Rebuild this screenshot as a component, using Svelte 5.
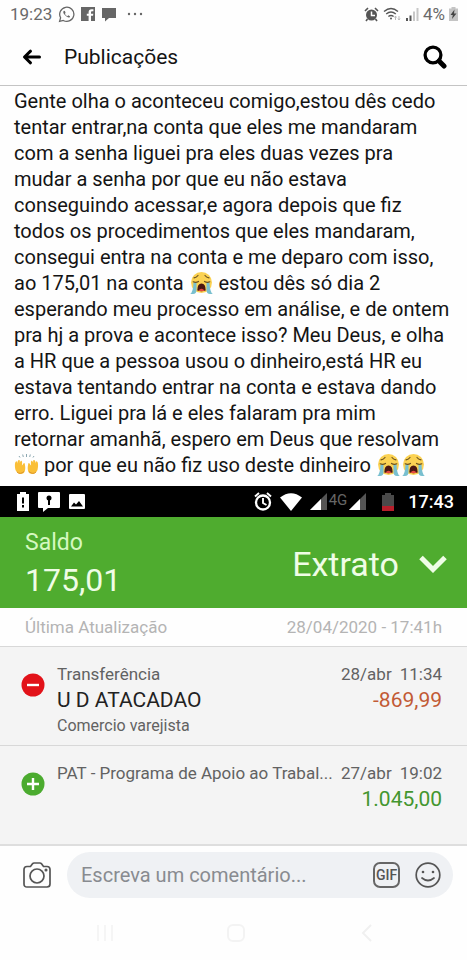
<script>
  let comment = "";

  // :cry: and :hands: are swapped for the drawn emoji
  const post = [
    "Gente olha o aconteceu comigo,estou dês cedo",
    "tentar entrar,na conta que eles me mandaram",
    "com a senha liguei pra eles duas vezes pra",
    "mudar a senha por que eu não estava",
    "conseguindo acessar,e agora depois que fiz",
    "todos os procedimentos que eles mandaram,",
    "consegui entra na conta e me deparo com isso,",
    "ao 175,01 na conta :cry: estou dês só dia 2",
    "esperando meu processo em análise, e de ontem",
    "pra hj a prova e acontece isso? Meu Deus, e olha",
    "a HR que a pessoa usou o dinheiro,está HR eu",
    "estava tentando entrar na conta e estava dando",
    "erro. Liguei pra lá e eles falaram pra mim",
    "retornar amanhã, espero em Deus que resolvam",
    ":hands: por que eu não fiz uso deste dinheiro :cry::cry:",
  ].map((line) => line.split(/(:cry:|:hands:)/).filter((part) => part));

  const entries = [
    {
      kind: "Transferência",
      name: "U D ATACADAO",
      note: "Comercio varejista",
      day: "28/abr",
      time: "11:34",
      amount: "-869,99",
      credit: false,
    },
    {
      kind: "PAT - Programa de Apoio ao Trabal...",
      name: "",
      note: "",
      day: "27/abr",
      time: "19:02",
      amount: "1.045,00",
      credit: true,
    },
  ];
</script>

<div class="screen">
  <div class="status">
    <span>19:23</span>
    <svg width="17" height="17" viewBox="0 0 24 24" fill="none" stroke="#666" stroke-width="1.8">
      <path d="M2.2 21.8l1.5-5.2a10 10 0 1 1 3.800 3.800z" />
      <path d="M8 7c-1 1-.9 3 1.700 5.800S15 17 16.500 15.800c.8-.7.5-1.300-.3-1.800l-1.700-.8-1.300 1.200c-1.500-.6-2.800-1.900-3.500-3.400l1-1.200L9.900 7.500C9.400 6.500 8.600 6.500 8 7z" fill="#666" stroke="none" />
    </svg>
    <svg width="14" height="14" viewBox="0 0 14 14">
      <path d="M0 0h14v14h-4V8.800h2l.3-2.100H10V5.400c0-.7.3-1.100 1.200-1.100h1.200V2.300h-1.800C8.600 2.300 7.600 3.400 7.600 5.200v1.500H5.800v2.100h1.800V14H0z" fill="#666" />
    </svg>
    <svg width="16" height="15" viewBox="0 0 16 15">
      <path d="M1 1h14v10H8l-4 3.500V11H1z" fill="#666" />
    </svg>
    <svg class="dots" width="16" height="4" viewBox="0 0 16 4" fill="#666">
      <circle cx="2" cy="2" r="1.200" /><circle cx="8" cy="2" r="1.200" /><circle cx="14" cy="2" r="1.200" />
    </svg>
    <div class="status-right">
      <svg width="15" height="15" viewBox="0 0 15 15">
        <path d="M1 4l3-3M14 4l-3-3M3.500 12L2 14M11.500 12l1.500 2" stroke="#555" stroke-width="1.600" />
        <circle cx="7.500" cy="8" r="5.500" fill="#555" />
        <path d="M7.500 4.500V8.500H11" stroke="#fff" stroke-width="1.500" fill="none" />
      </svg>
      <svg width="19" height="15" viewBox="0 0 19 15" fill="none" stroke="#555" stroke-width="1.400">
        <path d="M1 4.500Q8 -1.500 15 4.500M3.200 7Q8 3 12.800 7M5.400 9.500Q8 7.500 10.600 9.500" />
        <circle cx="8" cy="11.500" r="1" fill="#555" stroke="none" />
        <path d="M12.500 13V9m-1 1.500l1-1.500 1 1.500M16 9v4m-1-1.500l1 1.500 1-1.500" stroke="#bbb" stroke-width="1" />
      </svg>
      <svg width="13" height="14" viewBox="0 0 13 14">
        <path d="M0 11h2v3H0zM3.500 8.500h2V14h-2z" fill="#555" />
        <path d="M7 4.500h2V14H7zM10.500 1h2v13h-2z" fill="#c8c8c8" />
      </svg>
      <span>4%</span>
      <svg width="9" height="14" viewBox="0 0 9 14">
        <path d="M0 1.500h2.500V0h4v1.500H9V14H0z" fill="#c4c4c4" />
        <path d="M5.500 2.500L1.500 8h2.300L3 12l4.500-5.500H5z" fill="#444" />
      </svg>
    </div>
  </div>

  <header>
    <button aria-label="Voltar">
      <svg width="20" height="16" viewBox="0 0 20 16" fill="none" stroke="#000" stroke-width="3" stroke-linecap="round" stroke-linejoin="round">
        <path d="M8.500 2.200L2.500 8l6 5.800M3.500 8h14" />
      </svg>
    </button>
    <h1>Publicações</h1>
    <button aria-label="Pesquisar">
      <svg width="24" height="24" viewBox="0 0 24 24" fill="none" stroke="#000">
        <circle cx="10" cy="10" r="7.900" stroke-width="3.300" />
        <path d="M16 16l5 5" stroke-width="5" stroke-linecap="round" />
      </svg>
    </button>
  </header>

  <p class="post">
    {#each post as line}
      {#each line as part}
        {#if part === ":cry:"}
          <svg class="emoji" viewBox="0 0 25 24" role="img" aria-label="chorando">
            <circle cx="12.500" cy="11.500" r="10.500" fill="#fbd253" />
            <path d="M4.500 11.500h3V19q0 4-3.500 4H1.200q3-2 3.300-11.500zM20.500 11.500h-3V19q0 4 3.500 4h2.800q-3-2-3.300-11.500z" fill="#78bfcf" />
            <path d="M4.200 10.800q2.800 1.200 5.300-.4M20.800 10.800q-2.800 1.200-5.300-.4M5 6.800Q7.500 6.500 9 4.500M20 6.800Q17.500 6.500 16 4.500" fill="none" stroke="#6b5220" stroke-width="1.200" stroke-linecap="round" />
            <path d="M8.300 19.500q0-7 4.200-7t4.200 7q-4.200 1.500-8.400 0z" fill="#4b1712" />
            <path d="M9.300 19.800q3.200-4 6.400 0-3.200.9-6.400 0z" fill="#e5483f" />
          </svg>
        {:else if part === ":hands:"}
          <svg class="emoji" viewBox="0 0 25 24" role="img" aria-label="mãos para cima">
            <path d="M10.500 10c1 3 1.500 9-1.500 10.500-3 1.300-6.500-.5-7.500-3.500C.8 14 .5 9.500 2 8.500c1-.6 1.200 1 1.300 2C3.500 8 4.300 6.500 5.300 7s.4 2 .4 3c.4-1.500 1.300-2.700 2-2s.4 2.500.2 4.500c.8-.5 1.400-2.500 2.600-2.500zM14.500 10c-1 3-1.500 9 1.500 10.500 3 1.300 6.500-.5 7.500-3.500.7-3 1-7.500-.5-8.500-1-.6-1.200 1-1.300 2-.2-2.500-1-4-2-3.500s-.4 2-.4 3c-.4-1.500-1.300-2.700-2-2s-.4 2.500-.2 4.500c-.8-.5-1.400-2.500-2.600-2.500z" fill="#fabf37" />
            <path d="M3 19q3 3 7-.5M22 19q-3 3-7-.5" fill="none" stroke="#dc962b" />
            <path d="M6 4.500L5 3M9.300 4L8.700 1.500M12.500 4V1M15.700 4l.6-2.500M19 4.500L20 3" stroke="#8ba6b0" />
          </svg>
        {:else}{part}{/if}
      {/each}
      <br />
    {/each}
  </p>

  <section class="bank">
    <div class="phone-bar">
      <svg width="12" height="19" viewBox="0 0 12 19">
        <path d="M0 2h3V0h6v2h3v17H0z" fill="#fff" />
        <path d="M6 5.500v6M6 13v2.500" stroke="#000" stroke-width="2" />
      </svg>
      <svg width="22" height="20" viewBox="0 0 22 20">
        <path d="M1 0h20q1 0 1 1v14q0 1-1 1H10l-5 4v-4H1q-1 0-1-1V1q0-1 1-1z" fill="#fff" />
        <circle cx="11" cy="6" r="2.500" /><path d="M11 7v6" stroke="#000" stroke-width="2" />
      </svg>
      <svg width="16" height="15" viewBox="0 0 16 15">
        <rect width="16" height="15" rx="1" fill="#fff" />
        <path d="M2 12.500l3-4 2 2 3-3.500 4 5.500z" />
      </svg>
      <div class="phone-right">
        <svg width="18" height="19" viewBox="0 0 18 19" fill="none" stroke="#fff">
          <circle cx="9" cy="10.500" r="7" stroke-width="2.300" />
          <path d="M1 4.500L5 1M17 4.500L13 1M9 6v5l3.500 2" stroke-width="1.900" />
        </svg>
        <svg width="22" height="18" viewBox="0 0 22 18">
          <path d="M0 4.500Q11-4 22 4.500L11 18z" fill="#fff" />
        </svg>
        <svg width="17" height="17" viewBox="0 0 17 17">
          <path d="M0 17L17 0v17z" fill="#555" /><path d="M0 17L11 6v11z" fill="#fff" />
        </svg>
        <span class="net">4G</span>
        <svg width="17" height="17" viewBox="0 0 17 17">
          <path d="M0 17L17 0v17z" fill="#555" /><path d="M0 17L11 6v11z" fill="#fff" />
        </svg>
        <svg class="battery" width="12" height="18" viewBox="0 0 12 18">
          <path d="M0 2h3V0h6v2h3v16H0z" fill="#4a4a4a" /><path d="M0 13h12v5H0z" fill="#b71f2b" />
        </svg>
        <span class="clock">17:43</span>
      </div>
    </div>

    <div class="balance">
      <div>
        <div class="label">Saldo</div>
        <div class="value">175,01</div>
      </div>
      <button>
        Extrato
        <svg width="28" height="18" viewBox="0 0 28 18" fill="none" stroke="#effde6" stroke-width="5">
          <path d="M2 2.500l12 12 12-12" />
        </svg>
      </button>
    </div>

    <div class="updated">
      <span>Última Atualização</span>
      <span>28/04/2020 - 17:41h</span>
    </div>

    {#each entries as entry}
      <div class="entry">
        <svg width="24" height="24" viewBox="0 0 24 24">
          <circle cx="12" cy="12" r="11.500" fill={entry.credit ? "#4bab2f" : "#e21219"} />
          <path d={entry.credit ? "M6 12h12M12 6v12" : "M6 12h12"} stroke="#fff" stroke-width="2.400" />
        </svg>
        <div class="what">
          <div>{entry.kind}</div>
          <div class="name">{entry.name}</div>
          <div class="note">{entry.note}</div>
        </div>
        <div class="when">
          <div><span>{entry.day}</span><span>{entry.time}</span></div>
          <div class="amount" class:credit={entry.credit}>{entry.amount}</div>
        </div>
      </div>
    {/each}
  </section>

  <form class="composer" on:submit|preventDefault>
    <button type="button" aria-label="Câmera">
      <svg width="28" height="26" viewBox="0 0 28 26" fill="none" stroke="#555" stroke-width="1.700">
        <path d="M4 4.500h3.500l2-2.700q.6-.8 1.600-.8h5.800q1 0 1.600.8l2 2.700H24q3 0 3 3V22q0 3-3 3H4q-3 0-3-3V7.500q0-3 3-3z" />
        <circle cx="14" cy="14" r="7" /><circle cx="23" cy="8" r=".7" />
      </svg>
    </button>
    <div class="field">
      <input type="text" aria-label="Escreva um comentário" placeholder="Escreva um comentário..." bind:value={comment} />
      <button class="gif" type="button">GIF</button>
      <button type="button" aria-label="Emoji">
        <svg width="26" height="26" viewBox="0 0 26 26" fill="none" stroke="#555" stroke-width="1.700">
          <circle cx="13" cy="13" r="11.800" />
          <path d="M7 16q6 5 12 0" stroke-linecap="round" />
          <circle cx="8" cy="10" r="1.300" fill="#555" stroke="none" /><circle cx="18" cy="10" r="1.300" fill="#555" stroke="none" />
        </svg>
      </button>
    </div>
  </form>

  <nav>
    <button aria-label="Recentes">
      <svg width="18" height="18" viewBox="0 0 18 18" stroke="#f5f5f5" stroke-width="2"><path d="M2 1v16M9 1v16M16 1v16" /></svg>
    </button>
    <button aria-label="Início">
      <svg width="18" height="18" viewBox="0 0 18 18" fill="none" stroke="#f3f3f3" stroke-width="2"><rect x="1" y="1" width="16" height="16" rx="5" /></svg>
    </button>
    <button aria-label="Voltar à tela anterior">
      <svg width="18" height="18" viewBox="0 0 18 18" fill="none" stroke="#f0f0f0" stroke-width="2"><path d="M13 1L5 9l8 8" /></svg>
    </button>
  </nav>
</div>

<style>
  :global(body) {
    background: #fefefe;
  }
  .screen {
    font-family: Roboto, "Liberation Sans", sans-serif;
    color: #141414;
    overflow: hidden;
  }
  svg {
    display: block;
    flex: none;
  }
  button {
    font: inherit;
    color: inherit;
    background: none;
    border: none;
    padding: 0;
    cursor: pointer;
  }
  .status {
    display: flex;
    align-items: center;
    gap: 6px;
    height: 28px;
    padding: 0 9px 0 10px;
    font-size: 17px;
    color: #6a6a6a;
  }
  .dots {
    margin-left: 4px;
  }
  .status-right {
    display: flex;
    align-items: center;
    gap: 4px;
    margin-left: auto;
  }
  header {
    display: flex;
    align-items: center;
    height: 57px;
    padding: 0 20px 0 22px;
    border-bottom: 1px solid #c4c4c4;
  }
  h1 {
    flex: 1;
    margin: 0 0 0 22px;
    font-size: 21px;
    font-weight: 400;
  }
  .post {
    margin: 0;
    padding: 2px 0 8px 14px;
    font-size: 20px;
    line-height: 26px;
    white-space: nowrap;
  }
  .emoji {
    display: inline-block;
    width: 25px;
    height: 24px;
    vertical-align: -5px;
  }
  .phone-bar {
    display: flex;
    align-items: center;
    gap: 9px;
    height: 31px;
    padding: 0 13px 0 17px;
    background: #000;
    color: #fff;
  }
  .phone-right {
    display: flex;
    align-items: center;
    gap: 8px;
    margin-left: auto;
  }
  .net {
    align-self: flex-start;
    margin: 0 -6px;
    font-size: 15px;
    line-height: 18px;
    color: #666;
  }
  .battery {
    margin: 0 6px 0 8px;
  }
  .clock {
    font-size: 18px;
    font-weight: 500;
  }
  .balance {
    display: flex;
    align-items: center;
    justify-content: space-between;
    height: 89px;
    padding: 2px 20px 0 25px;
    background: #4fac2f;
    color: #effde6;
  }
  .label {
    font-size: 23px;
    line-height: 32px;
    color: #d5f8c0;
  }
  .value {
    font-size: 32px;
    line-height: 42px;
  }
  .balance button {
    display: flex;
    align-items: center;
    gap: 20px;
    font-size: 34px;
  }
  .updated {
    display: flex;
    align-items: center;
    justify-content: space-between;
    height: 38px;
    padding: 0 25px;
    font-size: 17px;
    color: #b4b4b4;
  }
  .entry {
    display: flex;
    height: 82px;
    padding: 16px 25px 0 21px;
    border-top: 1px solid #d8d8d8;
    background: #f4f4f4;
    font-size: 17px;
    line-height: 22px;
    color: #626262;
    white-space: nowrap;
  }
  .entry > svg {
    margin: 10px 12px 0 0;
  }
  .what {
    flex: 1;
  }
  .name,
  .amount {
    font-size: 21px;
    line-height: 30px;
  }
  .name {
    min-height: 30px;
    color: #222;
  }
  .note {
    font-size: 16px;
  }
  .when {
    text-align: right;
  }
  .when span + span {
    margin-left: 8px;
  }
  .amount {
    color: #c25a35;
  }
  .credit {
    color: #43962f;
  }
  .composer {
    display: flex;
    align-items: center;
    gap: 16px;
    padding: 6px 14px 6px 23px;
    border-top: 2px solid #dedede;
  }
  .field {
    display: flex;
    flex: 1;
    align-items: center;
    gap: 15px;
    height: 46px;
    padding: 0 12px 0 14px;
    border-radius: 23px;
    background: #eff1f4;
  }
  input {
    flex: 1;
    min-width: 0;
    border: none;
    padding: 0;
    background: none;
    outline: none;
    font: inherit;
    font-size: 20px;
    color: #222;
  }
  input::placeholder {
    color: #888b90;
    opacity: 1;
  }
  .gif {
    width: 27px;
    height: 26px;
    border: 2px solid #666;
    border-radius: 7px;
    font-size: 14px;
    line-height: 22px;
    font-weight: 500;
    color: #555;
  }
  nav {
    display: flex;
    justify-content: space-between;
    padding: 20px 91px 14px 96px;
  }
</style>
